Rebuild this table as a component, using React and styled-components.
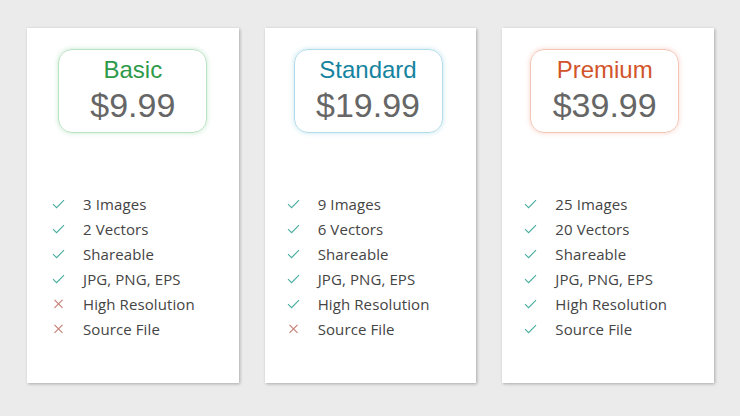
import React from 'react';
import styled, { createGlobalStyle } from 'styled-components';

const GlobalStyle = createGlobalStyle`
  html, body {
    margin: 0;
    padding: 0;
    background: #ebebeb;
  }
`;

const Page = styled.div`
  width: 740px;
  height: 416px;
  box-sizing: border-box;
  padding: 28px 26px 0 27px;
  display: flex;
  gap: 26px;
  align-items: flex-start;
`;

const Card = styled.div`
  width: 212px;
  height: 355px;
  background: #fff;
  box-shadow: 1px 1px 3px rgba(0, 0, 0, 0.28);
  box-sizing: border-box;
  padding-top: 21px;
  display: flex;
  flex-direction: column;
  align-items: center;
`;

const Badge = styled.div`
  width: 149px;
  height: 84px;
  box-sizing: border-box;
  border-radius: 14px;
  border: 1px solid ${(p) => p.$border};
  box-shadow: 0 0 5px ${(p) => p.$glow};
  display: flex;
  flex-direction: column;
  align-items: center;
  margin-left: ${(p) => p.$shift}px;
  font-family: 'Liberation Sans', Arial, sans-serif;
`;

const PlanName = styled.div`
  margin-top: 6px;
  font-size: 24px;
  line-height: 28px;
  color: ${(p) => p.$color};
`;

const Price = styled.div`
  margin-top: 2px;
  font-size: 34px;
  line-height: 38px;
  color: #666;
`;

const List = styled.ul`
  list-style: none;
  margin: 58px 0 0;
  padding: 0 0 0 ${(p) => 25 + p.$shift}px;
  align-self: stretch;
  font-family: 'Open Sans', 'Noto Sans', sans-serif;
  font-size: 15px;
  letter-spacing: 0.1px;
  color: #444;
`;

const Item = styled.li`
  display: flex;
  align-items: center;
  height: 25px;
`;

const Mark = styled.span`
  width: 13px;
  height: 10px;
  display: flex;
  margin-right: 18px;
`;

const Check = () => (
  <svg width="13" height="10" viewBox="0 0 13 10">
    <path d="M1 5.2 L4.6 8.6 L12 1.2" fill="none" stroke="#4aaea1" strokeWidth="1.15" />
  </svg>
);

const Cross = () => (
  <svg width="13" height="10" viewBox="0 0 13 10">
    <path d="M2.5 0.8 L10.5 8.8 M10.5 0.8 L2.5 8.8" fill="none" stroke="#c58077" strokeWidth="1.15" />
  </svg>
);

const plans = [
  {
    name: 'Basic',
    price: '$9.99',
    color: '#2e9a4a',
    border: '#b9e2c2',
    glow: 'rgba(120, 200, 140, 0.4)',
    shift: 0,
    listShift: 0,
    features: [
      ['3 Images', true],
      ['2 Vectors', true],
      ['Shareable', true],
      ['JPG, PNG, EPS', true],
      ['High Resolution', false],
      ['Source File', false],
    ],
  },
  {
    name: 'Standard',
    price: '$19.99',
    color: '#16839f',
    border: '#b2dcea',
    glow: 'rgba(110, 190, 215, 0.4)',
    shift: -5,
    listShift: -3,
    features: [
      ['9 Images', true],
      ['6 Vectors', true],
      ['Shareable', true],
      ['JPG, PNG, EPS', true],
      ['High Resolution', true],
      ['Source File', false],
    ],
  },
  {
    name: 'Premium',
    price: '$39.99',
    color: '#d2542a',
    border: '#f3c5b7',
    glow: 'rgba(235, 150, 125, 0.4)',
    shift: -7,
    listShift: -3,
    features: [
      ['25 Images', true],
      ['20 Vectors', true],
      ['Shareable', true],
      ['JPG, PNG, EPS', true],
      ['High Resolution', true],
      ['Source File', true],
    ],
  },
];

export default function App() {
  return (
    <>
      <GlobalStyle />
      <Page>
        {plans.map((plan) => (
          <Card key={plan.name}>
            <Badge $border={plan.border} $glow={plan.glow} $shift={plan.shift}>
              <PlanName $color={plan.color}>{plan.name}</PlanName>
              <Price>{plan.price}</Price>
            </Badge>
            <List $shift={plan.listShift}>
              {plan.features.map(([label, ok]) => (
                <Item key={label}>
                  <Mark>{ok ? <Check /> : <Cross />}</Mark>
                  {label}
                </Item>
              ))}
            </List>
          </Card>
        ))}
      </Page>
    </>
  );
}
